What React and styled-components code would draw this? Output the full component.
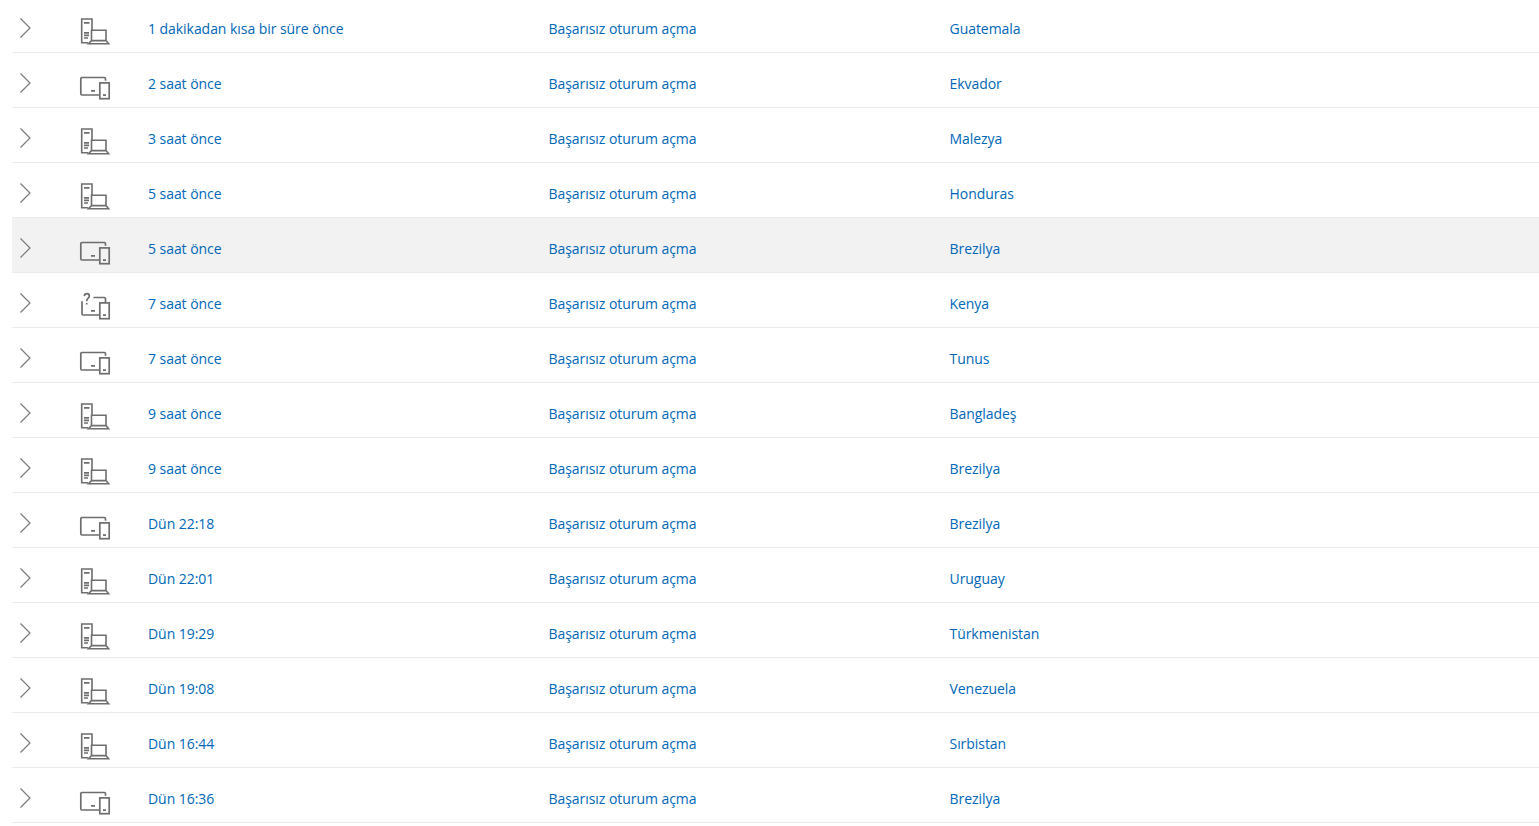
import styled, { createGlobalStyle } from 'styled-components';

const GlobalStyle = createGlobalStyle`
  html, body {
    margin: 0;
    padding: 0;
    background: #fff;
    overflow: hidden;
    font-family: "Open Sans", "Noto Sans", "Liberation Sans", sans-serif;
  }
`;

const List = styled.div`
  margin-left: 12px;
  display: flex;
  flex-direction: column;
`;

const Row = styled.div`
  box-sizing: border-box;
  display: grid;
  grid-template-columns: 68px 68px 400.5px 401px 1fr;
  align-items: center;
  height: ${(p) => (p.$first ? 53 : 55)}px;
  padding-top: ${(p) => (p.$first ? 6 : 8)}px;
  border-bottom: 1px solid #edebe9;
  background: ${(p) => (p.$active ? '#f2f2f2' : 'transparent')};
`;

const Toggle = styled.div`
  padding-left: 7px;
  display: flex;
  margin-top: -3px;
  svg {
    display: block;
  }
`;

const DeviceCell = styled.div`
  display: flex;
  svg {
    display: block;
  }
`;

const Cell = styled.div`
  font-size: 14px;
  letter-spacing: -0.05px;
  line-height: 20px;
  color: #0067b8;
  white-space: nowrap;
`;

const Chevron = () => (
  <svg width="14" height="22" viewBox="0 0 14 22" fill="none" stroke="#7a7a7a" strokeWidth="1.2">
    <path d="M1.5 1.5 L11 11 L1.5 20.5" />
  </svg>
);

const Server = () => (
  <svg width="30" height="30" viewBox="0 -1.4 30 30" fill="none" stroke="#6e6e6e" strokeWidth="1.6" overflow="visible">
    <path d="M12 14.5 V3.6 H1.7 V27.4 H8" />
    <path d="M4 7.5 H9.5 M4 17.5 H9 M4 20 H9 M4 22.6 H8" />
    <path d="M11.5 24.5 V14.8 H26 V24.5" />
    <path d="M11.5 25.2 H26 L28.6 28.4 H8.4 Z" />
  </svg>
);

const Devices = () => (
  <svg width="30" height="30" viewBox="0 -3.7 30 30" fill="none" stroke="#6e6e6e" strokeWidth="1.7" overflow="visible">
    <path d="M25.5 8 V6 Q25.5 4.8 24.3 4.8 H2 Q0.8 4.8 0.8 6 V21 Q0.8 22.3 2 22.3 H19.5" />
    <rect x="19.8" y="10.2" width="9.4" height="15.8" />
    <path d="M11 18.2 H15 M23 22.5 H26" />
  </svg>
);

const Unknown = () => (
  <svg width="30" height="30" viewBox="0 -3.7 30 30" fill="none" stroke="#6e6e6e" strokeWidth="1.7" overflow="visible">
    <path d="M13.5 4.8 H24.3 Q25.5 4.8 25.5 6 V10" />
    <path d="M2 8.5 V21 Q2 22.3 3.2 22.3 H19.5" />
    <path d="M4.3 3.5 Q4.6 1 6.8 1 Q9.3 1 9.3 3.4 Q9.3 5 7.8 5.9 Q6.7 6.6 6.7 8.5" />
    <path d="M6.7 10.2 V11.8" />
    <rect x="19.8" y="10.2" width="9.4" height="15.8" />
    <path d="M11 18.2 H15 M23 22.5 H26" />
  </svg>
);

const icons = { server: Server, devices: Devices, unknown: Unknown };

const rows = [
  { time: '1 dakikadan kısa bir süre önce', device: 'server', country: 'Guatemala' },
  { time: '2 saat önce', device: 'devices', country: 'Ekvador' },
  { time: '3 saat önce', device: 'server', country: 'Malezya' },
  { time: '5 saat önce', device: 'server', country: 'Honduras' },
  { time: '5 saat önce', device: 'devices', country: 'Brezilya', active: true },
  { time: '7 saat önce', device: 'unknown', country: 'Kenya' },
  { time: '7 saat önce', device: 'devices', country: 'Tunus' },
  { time: '9 saat önce', device: 'server', country: 'Bangladeş' },
  { time: '9 saat önce', device: 'server', country: 'Brezilya' },
  { time: 'Dün 22:18', device: 'devices', country: 'Brezilya' },
  { time: 'Dün 22:01', device: 'server', country: 'Uruguay' },
  { time: 'Dün 19:29', device: 'server', country: 'Türkmenistan' },
  { time: 'Dün 19:08', device: 'server', country: 'Venezuela' },
  { time: 'Dün 16:44', device: 'server', country: 'Sırbistan' },
  { time: 'Dün 16:36', device: 'devices', country: 'Brezilya' },
];

const App = () => (
  <>
    <GlobalStyle />
    <List>
      {rows.map((row, idx) => {
        const Icon = icons[row.device];
        return (
          <Row key={idx} $first={idx === 0} $active={row.active}>
            <Toggle>
              <Chevron />
            </Toggle>
            <DeviceCell>
              <Icon />
            </DeviceCell>
            <Cell>{row.time}</Cell>
            <Cell>Başarısız oturum açma</Cell>
            <Cell>{row.country}</Cell>
          </Row>
        );
      })}
    </List>
  </>
);

export default App;
